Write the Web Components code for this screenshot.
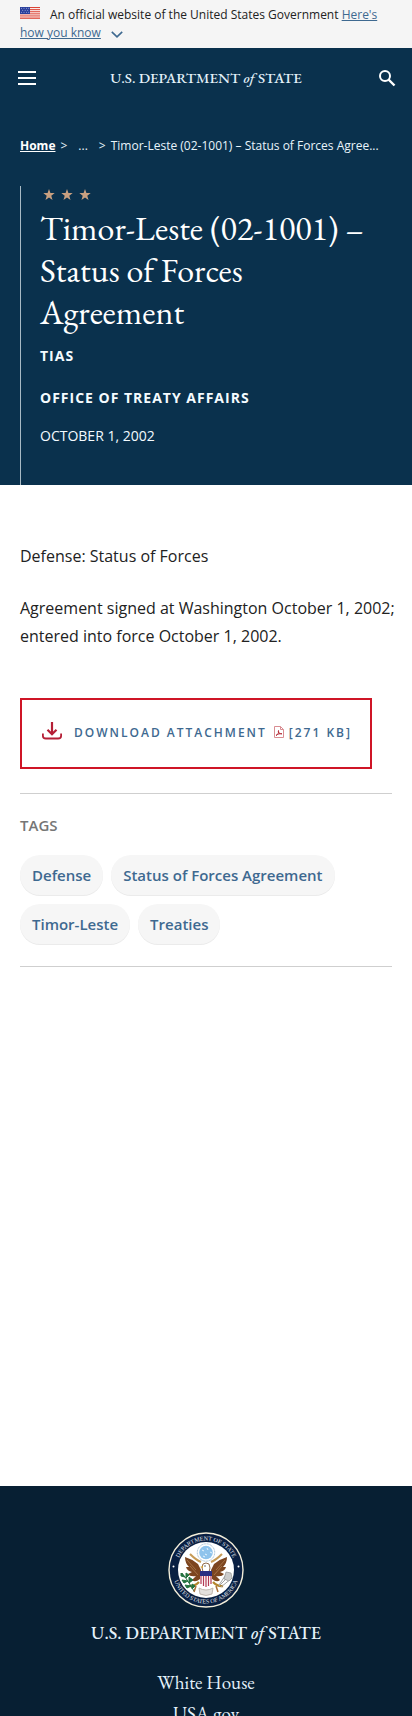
<!DOCTYPE html>
<html lang="en">
<head>
<meta charset="utf-8">
<meta name="viewport" content="width=device-width, initial-scale=1">
<title>Timor-Leste (02-1001) – Status of Forces Agreement</title>
<style>
  html { background: #fff; }
  body {
    margin: 0;
    min-height: 100vh;
    font-family: "Open Sans", "Noto Sans", sans-serif;
    color: #222;
    --navy: #0a314d;
    --navy-deep: #071f33;
    --link: #3e6990;
    --serif: "EB Garamond", "Liberation Serif", serif;
    --gutter: 20px;
  }
</style>
</head>
<body>
<gov-banner></gov-banner>
<site-header></site-header>
<main>
  <page-hero>
    <crumb-trail slot="trail"></crumb-trail>
    <span slot="title">Timor-Leste (02-1001) – Status of Forces Agreement</span>
    <span slot="kind">TIAS</span>
    <span slot="office">OFFICE OF TREATY AFFAIRS</span>
    <span slot="date">OCTOBER 1, 2002</span>
  </page-hero>
  <article-body>
    <text-block>Defense: Status of Forces</text-block>
    <text-block>Agreement signed at Washington October 1, 2002; entered into force October 1, 2002.</text-block>
    <download-link></download-link>
    <tag-list>
      <tag-pill>Defense</tag-pill>
      <tag-pill>Status of Forces Agreement</tag-pill>
      <tag-pill>Timor-Leste</tag-pill>
      <tag-pill>Treaties</tag-pill>
    </tag-list>
  </article-body>
</main>
<site-footer>
  <footer-link>White House</footer-link>
  <footer-link>USA.gov</footer-link>
</site-footer>

<script>
const define = (name, html) => {
  const template = document.createElement('template');
  template.innerHTML = html;
  customElements.define(name, class extends HTMLElement {
    constructor() {
      super();
      this.attachShadow({ mode: 'open' }).append(template.content.cloneNode(true));
    }
  });
};

define('gov-banner', `
<style>
  :host { display: block; background: #f5f5f5; padding: 6px var(--gutter); font-size: 12px; line-height: 18px; color: #222; }
  .flag { width: 20px; height: 12px; margin-right: 10px; vertical-align: 0; }
  a { color: var(--link); }
  .chev { width: 12px; height: 7px; margin-left: 10px; vertical-align: -1px; }
</style>
<svg class="flag" viewBox="0 0 20 12" aria-hidden="true">
  <rect width="20" height="12" fill="#fff"/>
  <path d="M0 .5h20M0 2.4h20M0 4.3h20M0 6.2h20M0 8.1h20M0 10h20M0 11.7h20" stroke="#db4436" stroke-width="1"/>
  <rect width="10" height="7" fill="#2b3f9b"/>
  <g fill="#a9b5e6"><circle cx="1.5" cy="1.3" r=".5"/><circle cx="4" cy="1.3" r=".5"/><circle cx="6.5" cy="1.3" r=".5"/><circle cx="8.7" cy="1.3" r=".5"/><circle cx="2.7" cy="3.3" r=".5"/><circle cx="5.2" cy="3.3" r=".5"/><circle cx="7.7" cy="3.3" r=".5"/><circle cx="1.5" cy="5.3" r=".5"/><circle cx="4" cy="5.3" r=".5"/><circle cx="6.5" cy="5.3" r=".5"/><circle cx="8.7" cy="5.3" r=".5"/></g>
</svg><span>An official website of the United States Government</span>
<a href="#">Here's how you know</a><svg class="chev" viewBox="0 0 12 7" aria-hidden="true"><path d="M.8.8 6 5.8 11.2.8" fill="none" stroke="#3e6990" stroke-width="1.6"/></svg>`);

define('dos-wordmark', `
<style>
  :host { display: inline-block; font-family: var(--serif); font-size: 15px; font-weight: 500; line-height: 20px; color: #e4f1fa; white-space: nowrap; }
</style>
<span>U.S. DEPARTMENT <i>of</i> STATE</span>`);

define('site-header', `
<style>
  :host { display: grid; grid-template-columns: 24px 1fr 24px; align-items: center; background: var(--navy); height: 60px; padding: 0 15px; }
  button { all: unset; display: flex; cursor: pointer; height: 24px; align-items: center; }
  a { text-decoration: none; justify-self: center; display: flex; }
  .find { justify-content: flex-end; }
</style>
<button type="button" aria-label="Menu"><svg width="24" height="16" viewBox="0 0 24 16"><path d="M3 2h18M3 8h18M3 14h18" stroke="#fff" stroke-width="2"/></svg></button>
<a href="#" aria-label="Home page"><dos-wordmark></dos-wordmark></a>
<button class="find" type="button" aria-label="Search"><svg width="20" height="20" viewBox="0 0 20 20"><circle cx="8" cy="8" r="5" fill="none" stroke="#fff" stroke-width="2"/><path d="m11.5 11.5 6 6" stroke="#fff" stroke-width="2.4"/></svg></button>`);

define('crumb-trail', `
<style>
  :host { display: block; font-size: 12px; line-height: 18px; color: #e8f4fb; }
  ol { list-style: none; margin: 0; padding: 0; display: flex; white-space: nowrap; }
  a { color: #fff; font-weight: 700; }
  .sep { margin: 0 5px; }
  .dots { margin: 0 6px; }
</style>
<nav aria-label="Breadcrumb"><ol>
  <li><a href="#">Home</a><span class="sep">&gt;</span></li>
  <li><span class="dots">...</span><span class="sep">&gt;</span></li>
  <li>Timor-Leste (02-1001) – Status of Forces Agree...</li>
</ol></nav>`);

define('page-hero', `
<style>
  :host { display: block; background: var(--navy); color: #f4fbff; padding: 29px var(--gutter) 0; }
  header { margin-top: 31px; border-left: 1px solid #a9bac4; padding: 3px 0 39px 19px; }
  .stars { display: block; }
  h1 { font: 400 34px/42px var(--serif); margin: 5px 0 0; padding-right: 20px; color: #fff; }
  p { margin: 0; font-size: 14px; line-height: 20px; }
  .kind, .office { font-weight: 700; letter-spacing: 1px; }
  .kind { margin-top: 13px; }
  .office { margin-top: 22px; }
  .date { margin-top: 18px; }
</style>
<slot name="trail"></slot>
<header>
  <svg class="stars" width="56" height="13" viewBox="0 0 56 13" fill="#c9a080" aria-hidden="true">
    <path id="st" d="M9 0l1.4 4.1h4.3l-3.4 2.7 1.2 4.2L9 8.5 5.500 11l1.200-4.200L3.300 4.100h4.300z"/>
    <use href="#st" x="18"/><use href="#st" x="36"/>
  </svg>
  <h1><slot name="title"></slot></h1>
  <p class="kind"><slot name="kind"></slot></p>
  <p class="office"><slot name="office"></slot></p>
  <p class="date"><slot name="date"></slot></p>
</header>`);

define('article-body', `
<style>:host { display: block; padding: 57px var(--gutter) 519px; }</style>
<slot></slot>`);

define('text-block', `
<style>
  :host { display: block; margin-right: -10px; }
  p { margin: 0 0 24px; font-size: 16px; line-height: 28px; }
</style>
<p><slot></slot></p>`);

define('download-link', `
<style>
  :host { display: block; margin-top: 48px; }
  a { display: inline-flex; align-items: center; box-sizing: border-box; height: 71px; padding: 0 18px 2px 20px; border: 2px solid #cf1526; color: var(--link); text-decoration: none; font-size: 12px; line-height: 18px; font-weight: 600; letter-spacing: 2px; white-space: nowrap; vertical-align: top; }
  .down { margin-right: 12px; }
  .pdf { margin: 0 4px 2px 6px; }
</style>
<a href="#">
  <svg class="down" width="20" height="22" viewBox="0 0 20 22" fill="none" stroke="#b51f36" stroke-width="1.800" aria-hidden="true"><path d="M10 0v12M5.500 7.800 10 12.300l4.500-4.500" stroke-width="2.200"/><path d="M.9 11.500v2.500q0 2.500 3 2.500h12.200q3 0 3-2.500v-2.500"/></svg>
  <span>DOWNLOAD ATTACHMENT</span>
  <svg class="pdf" width="12" height="12" viewBox="0 0 12 12" fill="none" stroke="#d98d92" aria-hidden="true"><path d="M1.500.5h6l3 3v8h-9z"/><path d="M7.500.5v3h3"/><path d="M3 9.500c2-1 3-3 2.500-5-.8 2 1 3.500 3.500 3.300-2-.5-4.500.3-6 1.700z" stroke="#b6303c"/></svg>
  <span>[271 KB]</span>
</a>`);

define('tag-list', `
<style>
  :host { display: block; margin-top: 24px; border: solid #cfcfcf; border-width: 1px 0; padding: 20px 0 22px; }
  h2 { margin: 0 0 19px; font-size: 15px; line-height: 22px; font-weight: 600; color: #767676; }
  div { display: flex; flex-wrap: wrap; gap: 9px 8px; }
</style>
<h2>TAGS</h2>
<div><slot></slot></div>`);

define('tag-pill', `
<style>
  :host { display: block; }
  a { display: block; padding: 10px 12px; border-radius: 20px; background: #f6f6f6; color: var(--link); text-decoration: none; font-size: 15px; line-height: 20px; font-weight: 600; box-shadow: 0 1px 0 #ebebeb; }
</style>
<a href="#"><slot></slot></a>`);

define('state-seal', `
<style>:host { display: block; } svg { display: block; }</style>
<svg width="76" height="76" viewBox="0 0 76 76" role="img" aria-label="Seal">
  <defs>
    <path id="top" d="M8.500 38a29.500 29.500 0 0 1 59 0"/>
    <path id="bottom" d="M4.500 38a33.500 33.500 0 0 0 67 0"/>
  </defs>
  <circle cx="38" cy="38" r="37" fill="#091f42" stroke="#f2edd9" stroke-width="1.400"/>
  <circle cx="38" cy="38" r="28" fill="#fff"/>
  <g fill="#e3e8ef" font-family="Liberation Serif, serif" font-size="6" text-anchor="middle">
    <text><textPath href="#top" startOffset="50%">DEPARTMENT OF STATE</textPath></text>
    <text><textPath href="#bottom" startOffset="50%">UNITED STATES OF AMERICA</textPath></text>
  </g>
  <circle cx="5.500" cy="34.500" r="1" fill="#fff"/><circle cx="70.500" cy="34.500" r="1" fill="#fff"/>
  <circle cx="38" cy="20.500" r="8.700" fill="none" stroke="#9ab9d0" stroke-dasharray="1 .6"/>
  <circle cx="38" cy="20.500" r="6.800" fill="#8ec3ec"/>
  <path d="m34 18 2 1m3-3 1 2m2 2 2 1m-7 1 2 1m-4 1 2 1" stroke="#e9f6ff"/>
  <path d="M22 22q6 6 11 8M54 22q-6 6-11 8" fill="none" stroke="#c79b56" stroke-width="2"/>
  <path d="M17 25q7 2 13 7l3 6-1 9q-5 4-8 1l4-4q-6 1-8-2l4-2q-5-1-6-5l3 0q-4-4-4-10zM59 25q-7 2-13 7l-3 6 1 9q5 4 8 1l-4-4q6 1 8-2l-4-2q5-1 6-5l-3 0q4-4 4-10z" fill="#7c451f"/>
  <path d="m19 28 9 10m-6-4 8 9M57 28l-9 10m6-4-8 9" stroke="#b58454" stroke-width=".7"/>
  <path d="M35 40q-2-5 0-8 3-2 6 0 2 4 0 8z" fill="#fff" stroke="#74451f" stroke-width=".8"/>
  <path d="m35 34-3 1 3 1z" fill="#d8a02c"/><circle cx="37" cy="34" r=".7" fill="#333"/>
  <path d="M31 50q-5 5-10 4M45 50q5 5 10 4" fill="none" stroke="#b5862f" stroke-width="2.400"/>
  <path d="M32 40h12v10q-1 4-6 5-5-1-6-5z" fill="#fff"/>
  <path d="M33 44v8M35.500 44v10M38 44v11M40.500 44v10M43 44v8" stroke="#b33a54" stroke-width="1.200"/>
  <path d="M32 39h12v5H32z" fill="#292f82"/>
  <path d="M14 41q5 6 12 18" fill="none" stroke="#23613a"/>
  <path d="m13 41 4 4-4-1zm5 0 0 5 3-3zm-4 7 6 1-4 2zm7-3 0 6 4-3zm-4 8 6 1-4 2zm7-1 0 5 3-3z" fill="#23733f" stroke="#23733f"/>
  <path d="m51 54 11-11m-9 12 11-9m-13 7 8-12" stroke="#a3a3a3"/><path d="m58 40 5 1 1 5-3 3-5-2z" fill="#ccc" stroke="#929292" stroke-width=".7"/>
  <path d="M31 56q7 4 14 0l-1 6q-6 3-12 0z" fill="#e4e1de" stroke="#b5aaa0" stroke-width=".8"/><path d="m28 54-2 6m22-6 2 6" stroke="#a96f39" stroke-width="1.500"/>
</svg>`);

define('site-footer', `
<style>
  :host { display: flex; flex-direction: column; align-items: center; background: var(--navy-deep); padding-top: 46px; }
  dos-wordmark { font-size: 18px; line-height: 24px; margin: 13px 0 22px; }
  nav { display: flex; flex-direction: column; align-items: center; }
</style>
<state-seal></state-seal>
<dos-wordmark></dos-wordmark>
<nav aria-label="Footer"><slot></slot></nav>`);

define('footer-link', `
<style>
  :host { display: block; }
  a { font: 19px/31px var(--serif); color: #e4f1fa; text-decoration: none; }
</style>
<a href="#"><slot></slot></a>`);
</script>
</body>
</html>
